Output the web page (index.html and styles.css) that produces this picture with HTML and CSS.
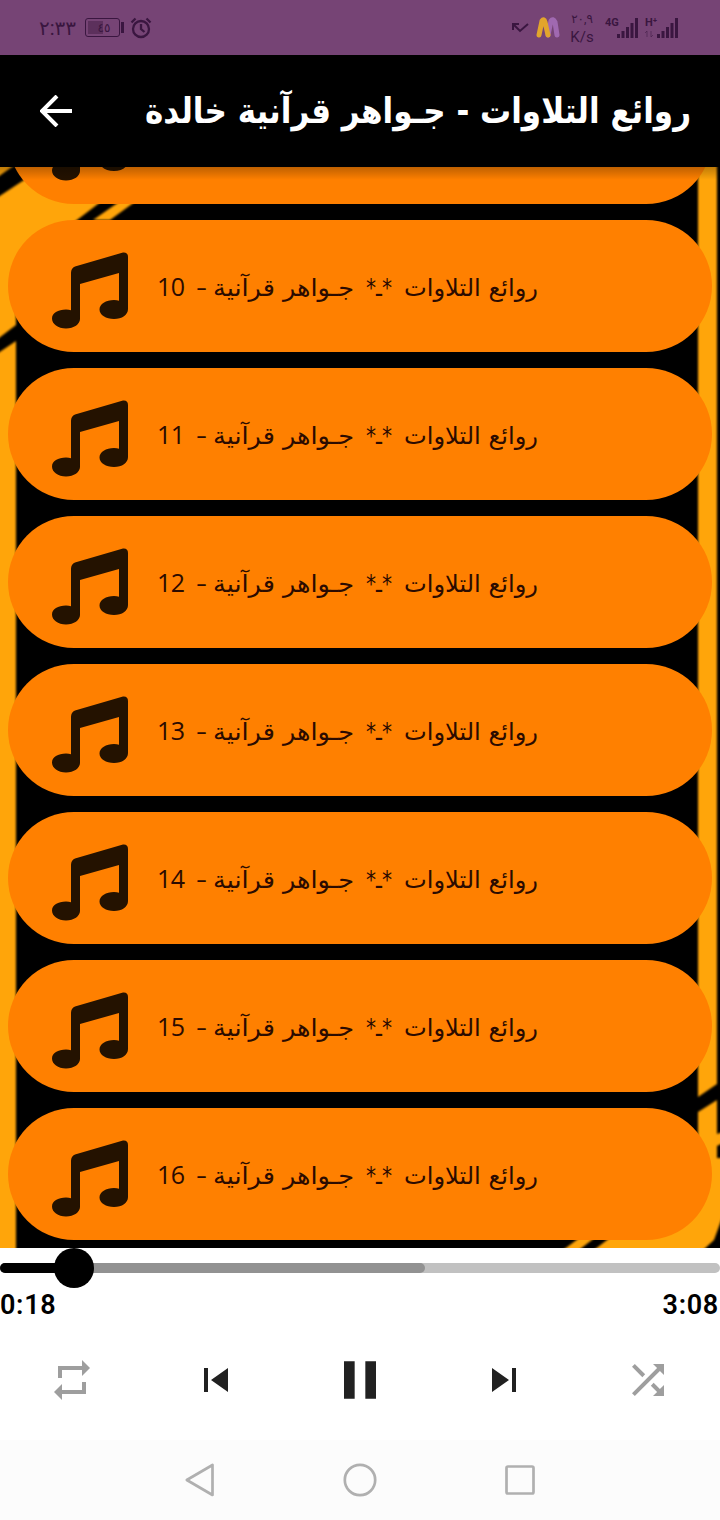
FILE: index.html
```
<!DOCTYPE html>
<html lang="ar">
<head>
    <meta charset="UTF-8">
    <title>روائع التلاوات - جـواهر قرآنية خالدة</title>
    <link rel="stylesheet" href="styles.css">
</head>
<body>
    <svg class="symbols">
        <symbol id="music" viewBox="0 0 76 77">
            <path d="M19 21Q19 16 23 14.500L71 .5Q76 0 76 5V57C76 63 70 67 62 67S47.500 63 47.500 57.500 54 48 62 48Q65 48 67 48.700V21L28 32V67C28 72 22 76.500 14 76.500S0 72 0 66.500 6 57.500 14 57.500Q17 57.500 19 58.200Z"/>
        </symbol>
    </svg>

    <div class="status">
        <span class="clock">٢:٣٣</span>
        <span class="battery"><b>٤٥</b></span>
        <svg class="alarm" width="22" height="22" viewBox="0 0 22 22">
            <circle cx="11" cy="12" r="8"/>
            <path d="M11 7v5l3.500 3M1.500 5.500l4-4M20.500 5.500l-4-4"/>
        </svg>
        <svg class="missed" width="18" height="12" viewBox="0 0 18 12">
            <path d="M2 8V2h6M2 2l7 7 8-7"/>
        </svg>
        <svg class="logo" width="24" height="22" viewBox="0 0 24 22">
            <path class="logo-b" d="M12 18L15 4Q17 1 19 5L21 18"/>
            <path class="logo-a" d="M3 18L6 4Q8 1 9 5L12 18"/>
        </svg>
        <div class="speed"><span>٢٠,٩</span><span>K/s</span></div>
        <svg class="signals" width="76" height="24" viewBox="0 0 76 24">
            <text x="0" y="10">4G</text>
            <path d="M13.500 22v-4M18 22v-7M22.500 22v-11M27 22v-15M31.500 22V2"/>
            <text x="40" y="10">H⁺</text>
            <path class="data" d="M42 21v-6l-2 2M46 15v6l2-2"/>
            <path d="M53.500 22v-4M58 22v-7M62.500 22v-11M67 22v-15M71.500 22V2"/>
        </svg>
    </div>

    <div class="header">
        <svg width="32" height="32" viewBox="0 0 32 32"><path d="M32 16H2M17 1L2 16l15 15"/></svg>
        <h1><svg width="548" height="60"><text x="547" y="42" textLength="546" lengthAdjust="spacingAndGlyphs">روائع التلاوات - جـواهر قرآنية خالدة</text></svg></h1>
    </div>

    <div class="list">
        <svg class="stripes" width="720" height="1081" viewBox="0 167 720 1081">
            <path d="M-5 155H28L12 167-5 179ZM-5 199L24 180 50 155H160L98 204 77 220 16 270V325L-5 341ZM116 204L150 178H166L132 204 110 220H93ZM-5 355L16 341V1260H-5ZM698 155H717V1084L698 1097ZM698 1112L717 1100V1134L725 1131V1142L717 1146V1158H725V1210L714 1240 700 1253H590L607 1240 698 1170ZM559 1253L590 1230H605L575 1253Z"/>
        </svg>
        <div class="card"><svg><use href="#music"/></svg></div>
    </div>

    <div class="player">
        <div class="seek"><div class="buffered"></div><div class="played"></div><div class="thumb"></div></div>
        <div class="times"><span>0:18</span><span>3:08</span></div>
        <div class="controls">
            <svg class="dim" viewBox="0 0 24 24"><path d="M7 7h10v3l4-4-4-4v3H5v6h2V7zm10 10H7v-3l-4 4 4 4v-3h12v-6h-2v4z"/></svg>
            <svg viewBox="0 0 24 24"><path d="M6 6h2v12H6zm3.500 6l8.500 6V6z"/></svg>
            <svg class="pause" viewBox="0 0 24 24"><path d="M6 19h4V5H6v14zm8-14v14h4V5h-4z"/></svg>
            <svg viewBox="0 0 24 24"><path d="M6 18l8.500-6L6 6v12zM16 6v12h2V6h-2z"/></svg>
            <svg class="dim" viewBox="0 0 24 24"><path d="M10.590 9.170L5.410 4 4 5.410l5.170 5.170 1.420-1.410zM14.500 4l2.040 2.040L4 18.590 5.410 20 17.960 7.460 20 9.500V4h-5.500zm.33 9.410l-1.410 1.410 3.130 3.130L14.500 20H20v-5.500l-2.040 2.040-3.130-3.130z"/></svg>
        </div>
    </div>

    <div class="nav">
        <svg viewBox="0 0 40 40"><path d="M32.500 5V35L6.800 20Z"/></svg>
        <svg viewBox="0 0 40 40"><circle cx="20" cy="20" r="15.200"/></svg>
        <svg viewBox="0 0 40 40"><rect x="6.500" y="6.500" width="27" height="27" rx="1.500"/></svg>
    </div>

    <script>
        const list = document.querySelector(".list");
        for (let i = 10; i <= 16; i++) {
            list.insertAdjacentHTML("beforeend", `<div class="card">
                <svg><use href="#music"/></svg>
                <svg class="name">
                    <text x="-1" y="38" textLength="28">${i}</text>
                    <text x="38" y="38" textLength="11" lengthAdjust="spacingAndGlyphs">-</text>
                    <text class="ar" x="196" y="38" textLength="141" lengthAdjust="spacingAndGlyphs">جـواهر قرآنية</text>
                    <text class="ar" x="234" y="38" textLength="26" lengthAdjust="spacingAndGlyphs">*ـ*</text>
                    <text class="ar" x="380" y="38" textLength="134" lengthAdjust="spacingAndGlyphs">روائع التلاوات</text>
                </svg>
            </div>`);
        }
    </script>
</body>
</html>
```
FILE: styles.css
```
body {
    margin: 0;
    width: 720px;
    height: 1520px;
    display: flex;
    flex-direction: column;
    overflow: hidden;
    background: #fff;
    font-family: Roboto, "DejaVu Sans", sans-serif;
}
svg {
    display: block;
    flex: none;
}
.symbols {
    position: absolute;
    width: 0;
    height: 0;
}
.status {
    height: 55px;
    flex: none;
    box-sizing: border-box;
    padding-left: 39px;
    display: flex;
    align-items: center;
    background: #764475;
    color: #3a1640;
}
.status svg {
    fill: none;
    stroke: #3a1640;
    stroke-width: 2;
}
.clock {
    width: 46px;
    font-size: 20px;
    white-space: nowrap;
}
.battery {
    position: relative;
    box-sizing: border-box;
    width: 35px;
    height: 19px;
    border: 1px solid #3a1640;
    border-radius: 3px;
    background: linear-gradient(to right, #5c305c 15px, transparent 15px);
    background-origin: content-box;
    background-clip: content-box;
    padding: 2px;
    display: flex;
    align-items: center;
    justify-content: center;
}
.battery b {
    font-size: 12px;
    font-weight: normal;
    padding-left: 3px;
}
.battery::after {
    content: "";
    position: absolute;
    right: -5px;
    top: 3px;
    width: 3px;
    height: 11px;
    background: #3a1640;
}
.status .alarm {
    margin-left: 10px;
    stroke-width: 2.300;
}
.status .missed {
    margin-left: 359px;
}
.status .logo {
    margin-left: 7px;
    stroke-width: 5;
    stroke-linecap: round;
}
.logo .logo-a {
    stroke: #e2a52c;
}
.logo .logo-b {
    stroke: #a069b0;
}
.speed {
    width: 30px;
    margin-left: 7px;
    display: flex;
    flex-direction: column;
    align-items: center;
    font-size: 15px;
    line-height: 18px;
}
.speed span:first-child {
    font-size: 12px;
}
.status .signals {
    margin-left: 8px;
    stroke-width: 3;
}
.signals text {
    font-size: 11px;
    font-weight: bold;
    fill: #3a1640;
    stroke: none;
}
.signals .data {
    stroke-width: 1;
    opacity: 0.5;
}
.header {
    height: 112px;
    flex: none;
    box-sizing: border-box;
    padding: 0 28px 0 40px;
    display: flex;
    align-items: center;
    justify-content: space-between;
    background: #000;
}
.header > svg {
    fill: none;
    stroke: #fff;
    stroke-width: 4;
}
.header h1 {
    margin: 0;
    font-family: "DejaVu Sans", sans-serif;
    font-size: 35px;
    font-weight: bold;
}
.header h1 svg {
    overflow: visible;
}
.header text {
    direction: rtl;
    fill: #fff;
}
.list {
    position: relative;
    height: 1081px;
    flex: none;
    box-sizing: border-box;
    padding: 0 8px 8px;
    display: flex;
    flex-direction: column;
    justify-content: flex-end;
    gap: 16px;
    overflow: hidden;
    background: #000;
}
.list::after {
    content: "";
    position: absolute;
    left: 0;
    right: 0;
    top: 0;
    height: 13px;
    background: linear-gradient(rgba(0, 0, 0, 0.25), rgba(0, 0, 0, 0));
}
.stripes {
    position: absolute;
    left: 0;
    top: 0;
    overflow: visible;
    fill: #ffa50a;
}
.stripes path {
    filter: blur(0.9px);
}
.card {
    position: relative;
    height: 132px;
    flex: none;
    box-sizing: border-box;
    padding-left: 44px;
    display: flex;
    align-items: center;
    border-radius: 66px;
    background: #ff8000;
}
.card svg {
    width: 76px;
    height: 77px;
    margin-top: 8px;
    fill: #241200;
}
.card .name {
    width: 400px;
    height: 60px;
    margin: 4px 0 0 30px;
    overflow: visible;
    fill: #2b0b00;
    font-family: "Open Sans", "DejaVu Sans", sans-serif;
    font-size: 25px;
}
.name .ar {
    direction: rtl;
    font-family: "DejaVu Sans", sans-serif;
    font-size: 24px;
}
.player {
    height: 192px;
    flex: none;
}
.seek {
    position: relative;
    height: 10px;
    margin-top: 15px;
    border-radius: 5px;
    background: #c1c1c1;
}
.buffered, .played {
    position: absolute;
    left: 0;
    top: 0;
    width: 425px;
    height: 10px;
    border-radius: 5px;
    background: #929292;
}
.played {
    width: 75px;
    background: #000;
}
.thumb {
    position: absolute;
    left: 54px;
    top: -15px;
    width: 40px;
    height: 40px;
    border-radius: 50%;
    background: #000;
}
.times {
    display: flex;
    justify-content: space-between;
    height: 32px;
    margin-top: 16px;
    padding-right: 1px;
    font-size: 27px;
    font-weight: 600;
    line-height: 32px;
    letter-spacing: 0.700px;
}
.controls {
    display: flex;
    align-items: center;
    height: 112px;
    margin-top: 3px;
}
.controls svg {
    width: 48px;
    height: 48px;
    margin: 0 48px;
    fill: #212121;
}
.controls .dim {
    fill: #9e9e9e;
}
.controls .pause {
    width: 64px;
    height: 64px;
    margin: 0 40px;
}
.nav {
    flex: 1;
    display: flex;
    align-items: center;
    justify-content: center;
    gap: 120px;
    background: #fcfcfc;
}
.nav svg {
    width: 40px;
    height: 40px;
    fill: none;
    stroke: #b0b0b0;
    stroke-width: 2.700;
    stroke-linejoin: round;
}
```
